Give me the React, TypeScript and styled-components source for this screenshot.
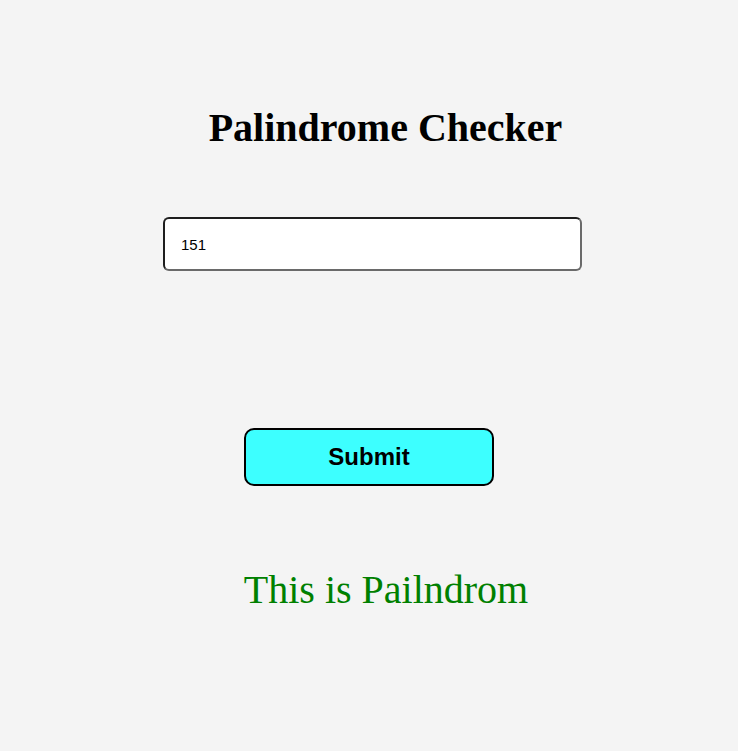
import React, { useState } from "react";
import styled, { createGlobalStyle } from "styled-components";

const Global = createGlobalStyle`
  html, body { margin: 0; padding: 0; background: #f4f4f4; }
  body { font-family: "Liberation Serif", "Times New Roman", serif; }
`;

const Page = styled.main`
  width: 738px;
  min-height: 751px;
  display: flex;
  flex-direction: column;
  align-items: center;
  box-sizing: border-box;
  padding-top: 104px;
`;

const Title = styled.h1`
  margin: 0 0 0 33px;
  font-family: "Liberation Serif", "Times New Roman", serif;
  font-weight: 700;
  font-size: 40px;
  line-height: 48px;
  color: #000;
`;

const Input = styled.input`
  margin: 65px 0 0 7px;
  width: 419px;
  height: 54px;
  box-sizing: border-box;
  border: 2px solid;
  border-color: #1e1e1e #6a6a6a #6a6a6a #1e1e1e;
  border-radius: 6px;
  background: #fff;
  padding: 0 16px;
  font-family: "Liberation Sans", Arial, sans-serif;
  font-size: 15px;
  color: #000;
  outline: none;
`;

const Button = styled.button`
  margin-top: 157px;
  width: 250px;
  height: 58px;
  box-sizing: border-box;
  border: 2px solid #000;
  border-radius: 10px;
  background: #3dffff;
  font-family: "Liberation Sans", Arial, sans-serif;
  font-weight: 700;
  font-size: 24px;
  color: #000;
  cursor: pointer;
`;

const Result = styled.p`
  margin: 80px 0 0 34px;
  font-family: "Liberation Serif", "Times New Roman", serif;
  font-size: 40px;
  line-height: 48px;
  color: #008000;
`;

export default function App() {
  const [value, setValue] = useState("151");
  return (
    <>
      <Global />
      <Page>
        <Title>Palindrome Checker</Title>
        <Input value={value} onChange={(e) => setValue(e.target.value)} />
        <Button>Submit</Button>
        <Result>This is Pailndrom</Result>
      </Page>
    </>
  );
}
